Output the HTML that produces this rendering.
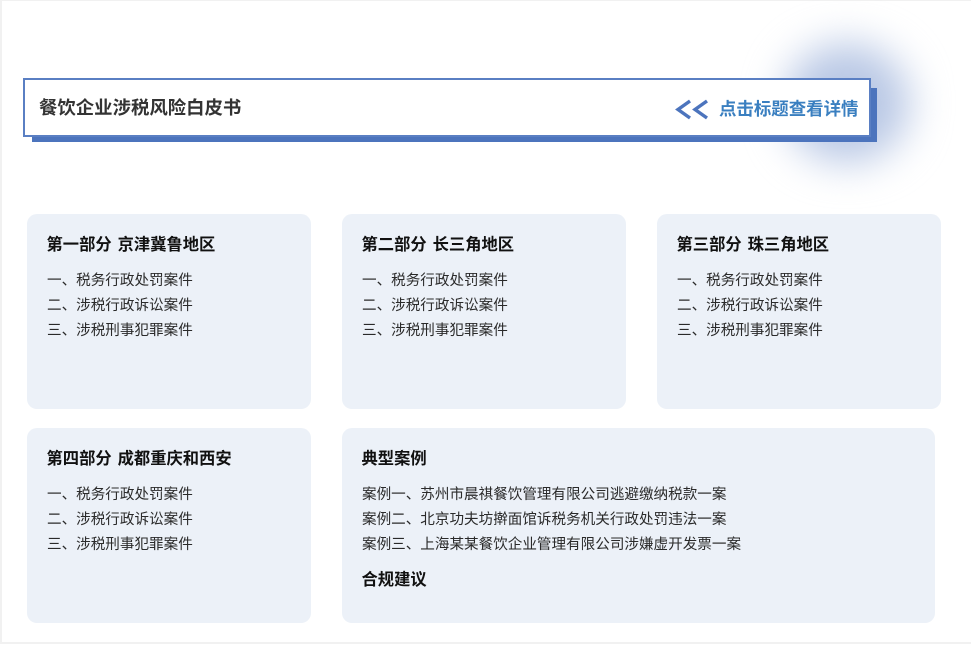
<!DOCTYPE html>
<html lang="zh-CN">
<head>
<meta charset="utf-8">
<style>
*{margin:0;padding:0;box-sizing:border-box}
html,body{width:971px;height:647px;overflow:hidden;background:#fff}
body{position:relative;font-family:"Liberation Sans","Noto Sans CJK SC",sans-serif;color:#333}
.edge{position:absolute;background:#f1f1f1}
.glow{position:absolute;left:784px;top:43px;width:126px;height:120px;border-radius:50%;background:#b9c8e5;filter:blur(20px)}
.shadow{position:absolute;left:32px;top:88px;width:845px;height:54px;background:#4c74bd}
.hero{position:absolute;left:23px;top:78px;width:848px;height:59px;background:#fff;border:2px solid #5a7fc3}
.t{position:absolute;white-space:nowrap;line-height:1}
.hero-t{left:39px;top:99px;font-size:18.4px;font-weight:700;color:#333}
.hero-r{left:719px;top:100.5px;font-size:17.45px;font-weight:700;color:#3a7fc0}
svg{position:absolute;left:674px;top:99px}
.card{position:absolute;background:#ecf1f8;border-radius:10px}
.h{font-size:16.3px;font-weight:700;color:#111;word-spacing:1.5px}
.l{font-size:14.58px;color:#2a2a2a}
</style>
</head>
<body>
<div class="edge" style="left:0;top:0;width:971px;height:1px"></div>
<div class="edge" style="left:0;top:0;width:2px;height:644px"></div>
<div class="edge" style="left:0;top:642px;width:971px;height:2px"></div>
<div class="glow"></div>
<div class="shadow"></div>
<div class="hero"></div>
<div class="t hero-t">餐饮企业涉税风险白皮书</div>
<svg width="36" height="22" viewBox="0 0 36 22" fill="none" stroke="#4c74bd" stroke-width="3.4"><path d="M16 2 L4 10.5 L16 19"/><path d="M33 2 L21 10.5 L33 19"/></svg>
<div class="t hero-r">点击标题查看详情</div>

<div class="card" style="left:27px;top:214px;width:284px;height:195px"></div>
<div class="t h" style="left:46.5px;top:237px">第一部分 京津冀鲁地区</div>
<div class="t l" style="left:47px;top:274px">一、税务行政处罚案件</div>
<div class="t l" style="left:47px;top:299px">二、涉税行政诉讼案件</div>
<div class="t l" style="left:47px;top:324px">三、涉税刑事犯罪案件</div>

<div class="card" style="left:342px;top:214px;width:284px;height:195px"></div>
<div class="t h" style="left:361.5px;top:237px">第二部分 长三角地区</div>
<div class="t l" style="left:362px;top:274px">一、税务行政处罚案件</div>
<div class="t l" style="left:362px;top:299px">二、涉税行政诉讼案件</div>
<div class="t l" style="left:362px;top:324px">三、涉税刑事犯罪案件</div>

<div class="card" style="left:657px;top:214px;width:284px;height:195px"></div>
<div class="t h" style="left:676.5px;top:237px">第三部分 珠三角地区</div>
<div class="t l" style="left:677px;top:274px">一、税务行政处罚案件</div>
<div class="t l" style="left:677px;top:299px">二、涉税行政诉讼案件</div>
<div class="t l" style="left:677px;top:324px">三、涉税刑事犯罪案件</div>

<div class="card" style="left:27px;top:428px;width:284px;height:195px"></div>
<div class="t h" style="left:46.5px;top:451px">第四部分 成都重庆和西安</div>
<div class="t l" style="left:47px;top:488px">一、税务行政处罚案件</div>
<div class="t l" style="left:47px;top:513px">二、涉税行政诉讼案件</div>
<div class="t l" style="left:47px;top:538px">三、涉税刑事犯罪案件</div>

<div class="card" style="left:342px;top:428px;width:593px;height:195px"></div>
<div class="t h" style="left:361.5px;top:451px">典型案例</div>
<div class="t l" style="left:362px;top:488px">案例一、苏州市晨祺餐饮管理有限公司逃避缴纳税款一案</div>
<div class="t l" style="left:362px;top:513px">案例二、北京功夫坊擀面馆诉税务机关行政处罚违法一案</div>
<div class="t l" style="left:362px;top:538px">案例三、上海某某餐饮企业管理有限公司涉嫌虚开发票一案</div>
<div class="t h" style="left:361.5px;top:572px">合规建议</div>
</body>
</html>
